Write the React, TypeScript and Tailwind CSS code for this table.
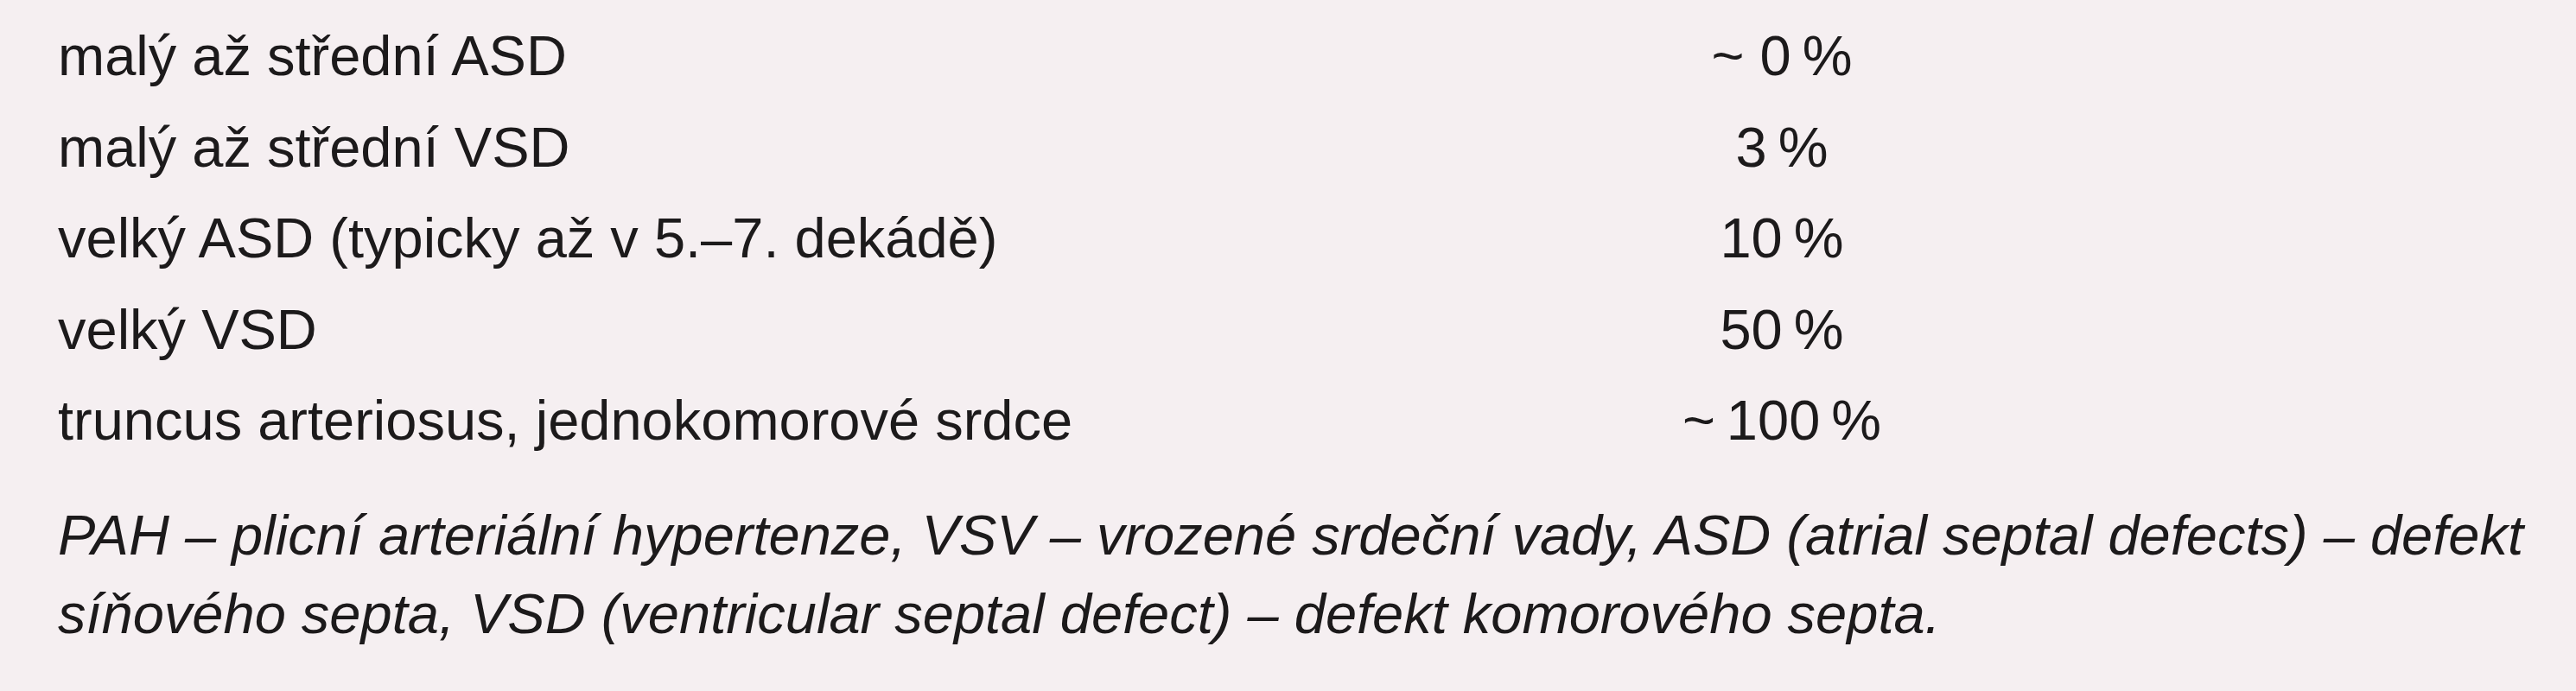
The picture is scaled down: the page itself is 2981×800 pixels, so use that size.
const rows: [string, string][] = [
  ["malý až střední ASD", "~ 0\u202F%"],
  ["malý až střední VSD", "3\u202F%"],
  ["velký ASD (typicky až v 5.–7. dekádě)", "10\u202F%"],
  ["velký VSD", "50\u202F%"],
  ["truncus arteriosus, jednokomorové srdce", "~\u202F100\u202F%"],
];

export default function App() {
  return (
    <div
      className="h-[800px] w-[2981px] bg-[#f5eff1] pl-[67px] pt-[12px] text-[#1c1a1b]"
      style={{ fontFamily: '"Liberation Sans", Arial, sans-serif' }}
    >
      {/* table rows */}
      <div className="grid grid-cols-[1730px_530px] text-[65px] leading-[105.5px]">
        {rows.map(([label, value]) => (
          <div key={label} className="contents">
            <div className="whitespace-nowrap">{label}</div>
            <div className="whitespace-nowrap text-center">{value}</div>
          </div>
        ))}
      </div>

      {/* footnote */}
      <p className="mt-[34px] w-[2880px] text-[65px] italic leading-[91px]">
        PAH – plicní arteriální hypertenze, VSV – vrozené srdeční vady, ASD (atrial septal defects) – defekt
        <br />
        síňového septa, VSD (ventricular septal defect) – defekt komorového septa.
      </p>
    </div>
  );
}
